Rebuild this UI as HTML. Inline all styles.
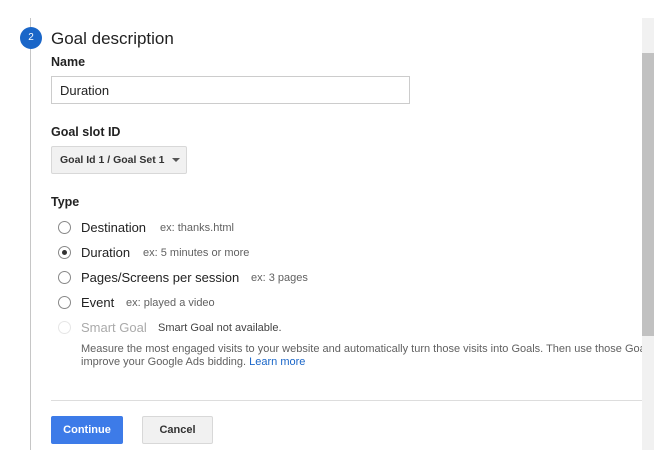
<!DOCTYPE html>
<html><head><style>
body{margin:0;width:665px;height:450px;background:#fff;position:relative;overflow:hidden;font-family:"Liberation Sans",Arial,sans-serif;color:#212121}
.a{position:absolute;white-space:nowrap}
.vl{position:absolute;left:30px;top:18px;width:1px;height:432px;background:#c6c6c6}
.circ{position:absolute;left:20px;top:27px;width:22px;height:22px;border-radius:50%;background:#1a66c8;color:#fff;font-size:10px;text-align:center;line-height:22px}
.lbl{font-weight:bold;font-size:12.5px;color:#222}
.r{position:absolute;left:58px;width:13px;height:13px;border:1px solid #888;border-radius:50%;box-sizing:border-box}
.t{font-size:13px;color:#222}
.h{font-size:11px;color:#616161}
</style></head><body>
<div class="vl"></div>
<div class="circ">2</div>
<div class="a" style="left:51px;top:29px;font-size:17px;color:#222">Goal description</div>
<div class="a lbl" style="left:51px;top:55px">Name</div>
<div class="a" style="left:51px;top:76px;width:359px;height:28px;border:1px solid #ccc;box-sizing:border-box"></div>
<div class="a t" style="left:60px;top:83px">Duration</div>
<div class="a lbl" style="left:51px;top:125px">Goal slot ID</div>
<div class="a" style="left:51px;top:146px;width:136px;height:28px;border:1px solid #d8d8d8;background:#f1f1f1;box-sizing:border-box;border-radius:2px"></div>
<div class="a" style="left:60px;top:154px;font-size:10.5px;font-weight:bold;color:#333">Goal Id 1 / Goal Set 1</div>
<div class="a" style="left:172px;top:158px;width:0;height:0;border-left:4px solid transparent;border-right:4px solid transparent;border-top:4px solid #555"></div>
<div class="a lbl" style="left:51px;top:195px">Type</div>

<div class="r" style="top:221px"></div>
<div class="a t" style="left:81px;top:220px">Destination</div><div class="a h" style="left:160px;top:222px">ex: thanks.html</div>
<div class="r" style="top:246px"></div><div class="a" style="left:62px;top:250px;width:5px;height:5px;border-radius:50%;background:#333"></div>
<div class="a t" style="left:81px;top:245px">Duration</div><div class="a h" style="left:143px;top:247px">ex: 5 minutes or more</div>
<div class="r" style="top:271px"></div>
<div class="a t" style="left:81px;top:270px">Pages/Screens per session</div><div class="a h" style="left:251px;top:272px">ex: 3 pages</div>
<div class="r" style="top:296px"></div>
<div class="a t" style="left:81px;top:295px">Event</div><div class="a h" style="left:126px;top:297px">ex: played a video</div>
<div class="r" style="top:321px;border-color:#e6e6e6"></div>
<div class="a t" style="left:81px;top:320px;color:#aaa">Smart Goal</div><div class="a h" style="left:158px;top:322px;color:#444">Smart Goal not available.</div>
<div class="a h" style="left:81px;top:343px">Measure the most engaged visits to your website and automatically turn those visits into Goals. Then use those Goals to</div>
<div class="a h" style="left:81px;top:356px">improve your Google Ads bidding. <span style="color:#1a66c8">Learn more</span></div>
<div class="a" style="left:51px;top:400px;width:591px;height:1px;background:#ddd"></div>
<div class="a" style="left:51px;top:416px;width:72px;height:28px;background:#3d7be8;border-radius:2px;color:#fff;font-size:11px;font-weight:bold;text-align:center;line-height:28px">Continue</div>
<div class="a" style="left:142px;top:416px;width:71px;height:28px;background:#f1f1f1;border:1px solid #d8d8d8;box-sizing:border-box;border-radius:2px;color:#333;font-size:11px;font-weight:bold;text-align:center;line-height:26px">Cancel</div>
<div class="a" style="left:642px;top:18px;width:12px;height:432px;background:#f1f1f1"></div>
<div class="a" style="left:642px;top:53px;width:12px;height:283px;background:#c1c1c1"></div>
<div class="a" style="left:654px;top:0;width:11px;height:450px;background:#fff"></div>
</body></html>
